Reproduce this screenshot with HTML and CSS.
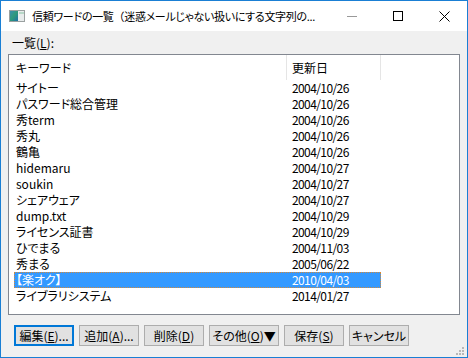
FILE: index.html
```html
<!DOCTYPE html>
<html lang="ja">
<head>
<meta charset="utf-8">
<link rel="stylesheet" href="styles.css">
</head>
<body>
<div class="window">
  <div class="titlebar">
    <svg class="app-icon" width="16" height="12" viewBox="0 0 16 12">
      <defs>
        <linearGradient id="g" x1="0" y1="0" x2="1" y2="1">
          <stop offset="0" stop-color="#3a8fb0"/>
          <stop offset="0.5" stop-color="#2e9a7a"/>
          <stop offset="1" stop-color="#1c6fa8"/>
        </linearGradient>
      </defs>
      <rect x="0.5" y="0.5" width="15" height="11" fill="#e8ecec" stroke="#9aa0a0"/>
      <rect x="1" y="1" width="8" height="10" fill="url(#g)"/>
      <rect x="10" y="2" width="5" height="2" fill="#b8d8c8"/>
    </svg>
    <span class="title">信頼ワードの一覧<span class="fw">（</span>迷惑メールじゃない扱いにする文字列の...</span>
    <div class="controls">
      <div class="ctl"><svg width="10" height="10" viewBox="0 0 10 10"><line x1="0" y1="5.5" x2="10" y2="5.5" stroke="#999" stroke-width="1"/></svg></div>
      <div class="ctl"><svg width="10" height="10" viewBox="0 0 10 10"><rect x="0.5" y="0.5" width="9" height="9" fill="none" stroke="#000" stroke-width="1"/></svg></div>
      <div class="ctl"><svg width="11" height="11" viewBox="0 0 11 11"><path d="M0.5 0.5 L10.5 10.5 M10.5 0.5 L0.5 10.5" stroke="#000" stroke-width="1" fill="none"/></svg></div>
    </div>
  </div>
  <div class="client">
    <div class="label">一覧(<u>L</u>):</div>
    <div class="list">
      <div class="header">
        <div class="hcol c1">キーワード</div>
        <div class="hcol c2">更新日</div>
      </div>
      <div class="row"><span class="k">サイトー</span><span class="d">2004/10/26</span></div>
      <div class="row"><span class="k">パスワード総合管理</span><span class="d">2004/10/26</span></div>
      <div class="row"><span class="k">秀term</span><span class="d">2004/10/26</span></div>
      <div class="row"><span class="k">秀丸</span><span class="d">2004/10/26</span></div>
      <div class="row"><span class="k">鶴亀</span><span class="d">2004/10/26</span></div>
      <div class="row"><span class="k">hidemaru</span><span class="d">2004/10/27</span></div>
      <div class="row"><span class="k">soukin</span><span class="d">2004/10/27</span></div>
      <div class="row"><span class="k">シェアウェア</span><span class="d">2004/10/27</span></div>
      <div class="row"><span class="k">dump.txt</span><span class="d">2004/10/29</span></div>
      <div class="row"><span class="k">ライセンス証書</span><span class="d">2004/10/29</span></div>
      <div class="row"><span class="k">ひでまる</span><span class="d">2004/11/03</span></div>
      <div class="row"><span class="k">秀まる</span><span class="d">2005/06/22</span></div>
      <div class="row selected"><span class="k">【楽オク】</span><span class="d">2010/04/03</span></div>
      <div class="row"><span class="k">ライブラリシステム</span><span class="d">2014/01/27</span></div>
    </div>
    <div class="buttons">
      <button class="btn default">編集(<u>E</u>)...</button>
      <button class="btn">追加(<u>A</u>)...</button>
      <button class="btn">削除(<u>D</u>)</button>
      <button class="btn wide">その他(<u>O</u>)▼</button>
      <button class="btn">保存(<u>S</u>)</button>
      <button class="btn">キャンセル</button>
    </div>
    <svg class="grip" width="9" height="9" viewBox="0 0 9 9">
      <rect x="6" y="0" width="2" height="2" fill="#b8b8b8"/>
      <rect x="3" y="3" width="2" height="2" fill="#b8b8b8"/>
      <rect x="6" y="3" width="2" height="2" fill="#b8b8b8"/>
      <rect x="0" y="6" width="2" height="2" fill="#b8b8b8"/>
      <rect x="3" y="6" width="2" height="2" fill="#b8b8b8"/>
      <rect x="6" y="6" width="2" height="2" fill="#b8b8b8"/>
    </svg>
  </div>
</div>
</body>
</html>
```
FILE: styles.css
```css
html, body {
  margin: 0;
  padding: 0;
}
.window {
  width: 468px;
  height: 358px;
  box-sizing: border-box;
  border: 1px solid #1a7fd4;
  display: flex;
  flex-direction: column;
  background: #f0f0f0;
  font-family: "Noto Sans CJK JP", sans-serif;
  font-size: 12px;
  color: #000;
  font-feature-settings: "palt";
}
.titlebar {
  height: 30px;
  background: #fff;
  display: flex;
  align-items: center;
  flex-shrink: 0;
}
.app-icon {
  margin-left: 8px;
  display: block;
  width: 16px;
  height: 12px;
  min-width: 16px;
  flex: 0 0 16px;
}
.title {
  margin-left: 7px;
  white-space: nowrap;
  line-height: 30px;
  flex: 0 0 auto;
  font-size: 11px;
  letter-spacing: -0.3px;
}
.fw {
  font-feature-settings: normal;
}
.controls {
  margin-left: auto;
  display: flex;
  height: 30px;
  flex: 0 0 138px;
}
.ctl {
  width: 46px;
  display: flex;
  align-items: center;
  justify-content: center;
}
.ctl svg {
  display: block;
}
.client {
  flex: 1;
  position: relative;
  padding: 0 7px;
}
.label {
  height: 23px;
  line-height: 23px;
  padding-left: 4px;
}
.list {
  height: 261px;
  box-sizing: border-box;
  border: 1px solid #828790;
  background: #fff;
}
.header {
  height: 25px;
  display: flex;
}
.hcol {
  line-height: 25px;
  height: 25px;
  box-sizing: border-box;
  border-right: 1px solid #e5e5e5;
}
.c1 {
  width: 278px;
  padding-left: 7px;
}
.c2 {
  width: 94px;
  padding-left: 5px;
}
.row {
  height: 16px;
  line-height: 16px;
  margin-left: 5px;
  width: 367px;
  display: flex;
  box-sizing: border-box;
}
.row.selected {
  background: #3399ff;
  color: #fff;
  outline: 1px dotted #d0883a;
  outline-offset: -1px;
}
.k {
  width: 272px;
  padding-left: 2px;
  box-sizing: border-box;
  white-space: nowrap;
}
.d {
  padding-left: 6px;
  letter-spacing: -0.6px;
  white-space: nowrap;
}
.buttons {
  display: flex;
  gap: 5px;
  margin-top: 10px;
  padding-left: 6px;
}
.btn {
  height: 21px;
  width: 60px;
  box-sizing: border-box;
  border: 1px solid #adadad;
  background: #e1e1e1;
  font: inherit;
  color: #000;
  text-align: center;
  line-height: 19px;
  padding: 0;
  white-space: nowrap;
  font-feature-settings: "palt";
}
.btn.default {
  border: 2px solid #0078d7;
  line-height: 17px;
}
.btn.wide {
  width: 70px;
}
.grip {
  position: absolute;
  right: 2px;
  bottom: 1px;
  display: block;
}
```
